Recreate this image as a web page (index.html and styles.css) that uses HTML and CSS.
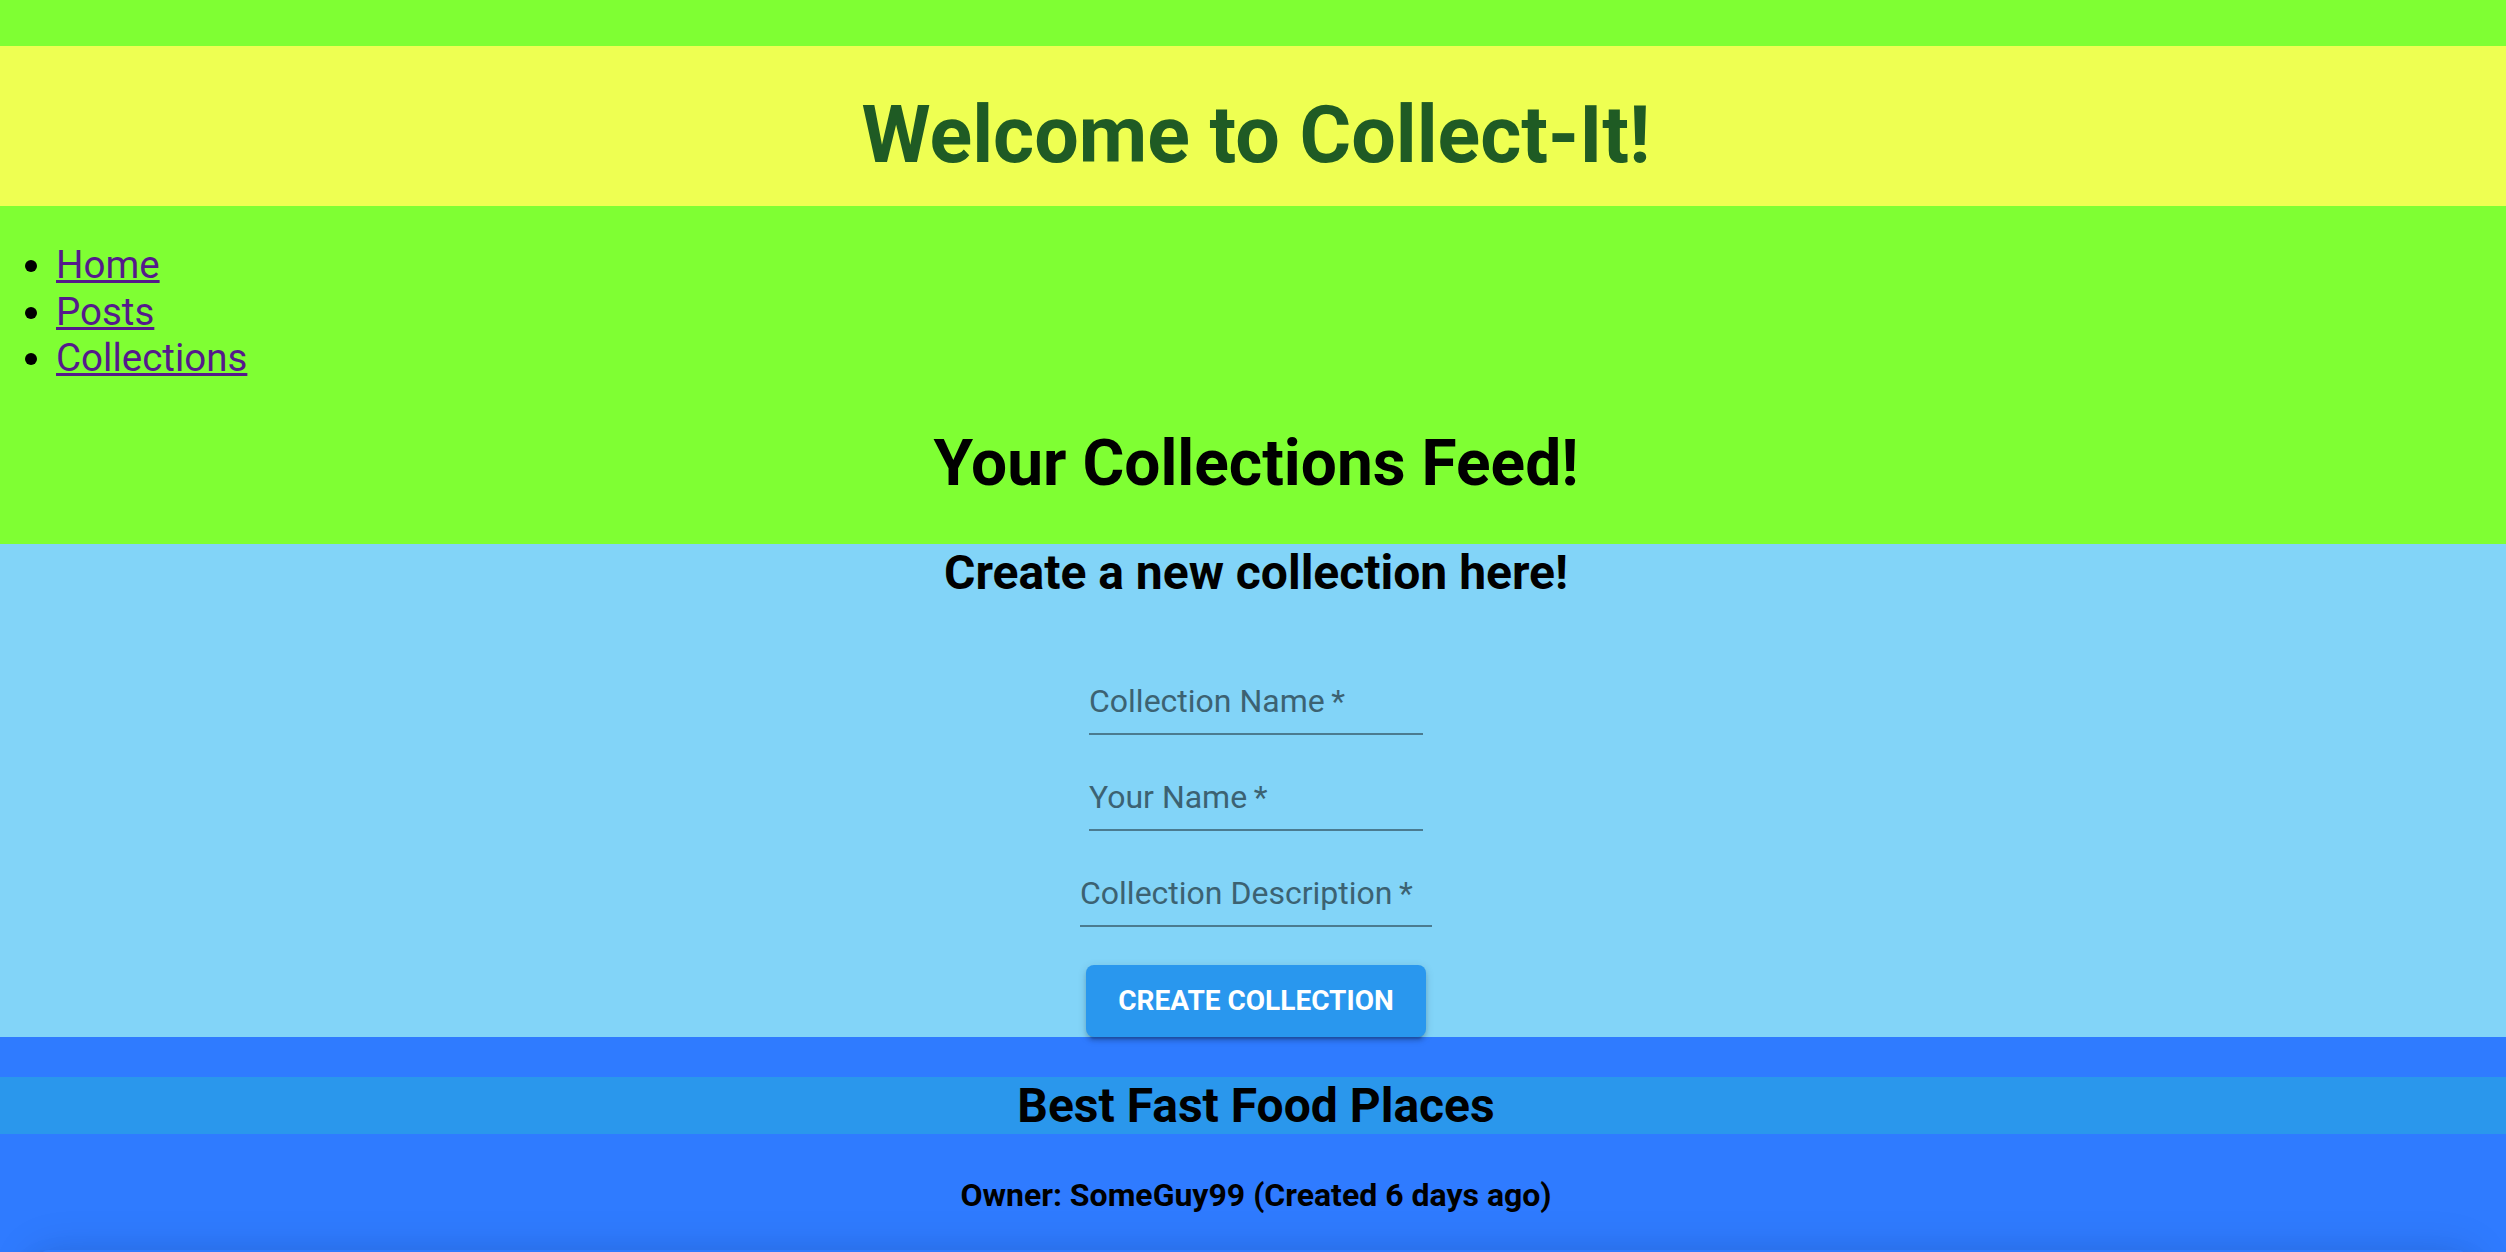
FILE: index.html
```html
<!DOCTYPE html>
<html lang="en">
<head>
<meta charset="utf-8">
<title>Collect-It</title>
<link rel="stylesheet" href="styles.css">
</head>
<body>
<div class="app">
  <header class="site-header">
    <h1 class="site-title">Welcome to Collect-It!</h1>
  </header>
  <section class="feed-top">
    <ul class="nav">
      <li><a href="#">Home</a></li>
      <li><a href="#">Posts</a></li>
      <li><a href="#">Collections</a></li>
    </ul>
    <h1 class="feed-title">Your Collections Feed!</h1>
  </section>
  <section class="create">
    <h2 class="create-title">Create a new collection here!</h2>
    <form class="create-form">
      <div class="field"><span class="field-label">Collection Name&thinsp;*</span></div>
      <div class="field"><span class="field-label">Your Name&thinsp;*</span></div>
      <div class="field field-wide"><span class="field-label">Collection Description&thinsp;*</span></div>
      <button type="button" class="create-btn">Create Collection</button>
    </form>
  </section>
  <section class="collections">
    <h2 class="collection-name">Best Fast Food Places</h2>
    <h4 class="collection-owner">Owner: SomeGuy99 (Created 6 days ago)</h4>
    <div class="collection-card"></div>
  </section>
</div>
</body>
</html>
```

FILE: styles.css
```css
html, body {
  margin: 0;
  padding: 0;
}
body {
  background: #7fff33;
  font-family: Roboto, "Noto Sans", sans-serif;
  overflow: hidden;
}
.app {
  padding-top: 46px;
}
.site-header {
  background: #eeff52;
  height: 160px;
  box-sizing: border-box;
  padding: 43px 0 0 6px;
  text-align: center;
}
.site-title {
  margin: 0;
  font-size: 79px;
  line-height: normal;
  font-weight: 700;
  color: #1f5b24;
}
.feed-top {
  background: #7fff33;
  padding: 36px 0 0;
  display: flow-root;
}
.nav {
  margin: 0;
  padding-left: 56px;
  font-size: 38.5px;
  line-height: 46.5px;
  color: #000;
}
.nav a {
  color: #551a8b;
  text-decoration: underline;
}
.feed-title {
  margin: 44px 0 43px;
  padding-left: 6px;
  text-align: center;
  font-size: 64px;
  line-height: normal;
  font-weight: 700;
  color: #000;
}
.create {
  background: #82d4f8;
  display: flow-root;
  padding-left: 6px;
  text-align: center;
}
.create-title {
  margin: 0;
  font-size: 48px;
  line-height: normal;
  font-weight: 700;
  color: #000;
}
.create-form {
  display: flex;
  flex-direction: column;
  align-items: center;
  padding-top: 38px;
}
.field {
  width: 334px;
  margin-top: 43px;
  padding-bottom: 13px;
  border-bottom: 2px solid #4b7b90;
  text-align: left;
}
.field-wide {
  width: 352px;
}
.field-label {
  display: block;
  font-size: 32px;
  line-height: 38px;
  color: #3c6272;
  white-space: nowrap;
}
.create-btn {
  margin-top: 38px;
  width: 340px;
  height: 72px;
  border: 0;
  border-radius: 8px;
  background: #2997ee;
  color: #fff;
  font-family: Roboto, "Noto Sans", sans-serif;
  font-size: 28px;
  font-weight: 700;
  letter-spacing: 0;
  text-transform: uppercase;
  box-shadow: 0 6px 2px -4px rgba(0,0,0,0.2), 0 4px 4px 0 rgba(0,0,0,0.14), 0 2px 10px 0 rgba(0,0,0,0.12);
  position: relative;
  z-index: 1;
}
.collections {
  background: #2f7bff;
  display: flow-root;
  padding-top: 40px;
  text-align: center;
}
.collection-name {
  margin: 0;
  padding-left: 6px;
  background: #2a97ec;
  font-size: 48px;
  line-height: normal;
  font-weight: 700;
  color: #000;
}
.collection-owner {
  margin: 42px 0 36px;
  padding-left: 6px;
  font-size: 32px;
  line-height: normal;
  font-weight: 700;
  color: #000;
}
.collection-card {
  margin: 0 40px;
  height: 300px;
  border-radius: 8px;
  background: #2f7bff;
  box-shadow: 0 11px 15px -7px rgba(0,0,0,0.2), 0 24px 38px 3px rgba(0,0,0,0.14), 0 9px 46px 8px rgba(0,0,0,0.12);
}
```
